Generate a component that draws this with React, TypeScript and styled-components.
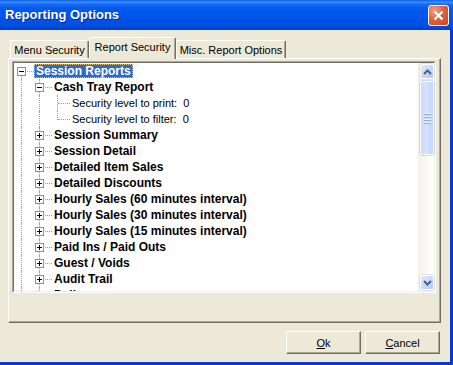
import React from "react";
import styled, { createGlobalStyle, css } from "styled-components";

const GlobalStyle = createGlobalStyle`
  html, body {
    margin: 0;
    padding: 0;
    background: #ece9d8;
    overflow: hidden;
  }
  body {
    font-family: "Liberation Sans", Arial, sans-serif;
    font-size: 11px;
    color: #000;
  }
`;

type Guide = " " | "|" | "T" | "L" | "F";

type TreeRow = {
  guides: Guide[];
  box?: "+" | "-";
  label: string;
  bold?: boolean;
  selected?: boolean;
};

const rows: TreeRow[] = [
  { guides: ["F"], box: "-", label: "Session Reports", bold: true, selected: true },
  { guides: ["|", "T"], box: "-", label: "Cash Tray Report", bold: true },
  { guides: ["|", "|", "T"], label: "Security level to print:  0" },
  { guides: ["|", "|", "L"], label: "Security level to filter:  0" },
  { guides: ["|", "T"], box: "+", label: "Session Summary", bold: true },
  { guides: ["|", "T"], box: "+", label: "Session Detail", bold: true },
  { guides: ["|", "T"], box: "+", label: "Detailed Item Sales", bold: true },
  { guides: ["|", "T"], box: "+", label: "Detailed Discounts", bold: true },
  { guides: ["|", "T"], box: "+", label: "Hourly Sales (60 minutes interval)", bold: true },
  { guides: ["|", "T"], box: "+", label: "Hourly Sales (30 minutes interval)", bold: true },
  { guides: ["|", "T"], box: "+", label: "Hourly Sales (15 minutes interval)", bold: true },
  { guides: ["|", "T"], box: "+", label: "Paid Ins / Paid Outs", bold: true },
  { guides: ["|", "T"], box: "+", label: "Guest / Voids", bold: true },
  { guides: ["|", "T"], box: "+", label: "Audit Trail", bold: true },
  { guides: ["|", "T"], box: "+", label: "Delivery", bold: true },
];

const tabs = [
  { label: "Menu Security", width: 79 },
  { label: "Report Security", width: 87, active: true },
  { label: "Misc. Report Options", width: 110 },
];

const Window = styled.div`
  width: 453px;
  height: 365px;
  display: flex;
  flex-direction: column;
`;

const TitleBar = styled.div`
  flex: none;
  height: 30px;
  box-sizing: border-box;
  display: flex;
  align-items: center;
  justify-content: space-between;
  padding: 0 4px 0 5px;
  background: linear-gradient(
    to bottom,
    #0a5fe6 0%,
    #3a8dff 7%,
    #1a6cf6 14%,
    #0058ee 30%,
    #0054e8 60%,
    #0050e0 85%,
    #003fc8 100%
  );
`;

const Title = styled.span`
  font-family: "Liberation Sans", Arial, sans-serif;
  font-weight: bold;
  font-size: 13px;
  color: #fff;
  text-shadow: 1px 1px #0a2a9a;
  padding-bottom: 1px;
`;

const CloseButton = styled.div`
  width: 21px;
  height: 21px;
  box-sizing: border-box;
  border: 1px solid #fff;
  border-radius: 3px;
  display: flex;
  align-items: center;
  justify-content: center;
  background: radial-gradient(circle at 30% 25%, #f4a184 0%, #e3603c 45%, #cf4520 100%);
  margin-top: 1px;
`;

const Frame = styled.div`
  flex: 1;
  display: flex;
  flex-direction: column;
  background: #ece9d8;
  border-right: 3px solid #0838d2;
  border-bottom: 3px solid #0838d2;
  padding: 7px 9px 0 8px;
`;

const TabStrip = styled.div`
  height: 21px;
  display: flex;
  align-items: flex-end;
  padding-left: 2px;
  position: relative;
  z-index: 1;
`;

const Tab = styled.div<{ $active?: boolean; $w: number }>`
  box-sizing: border-box;
  width: ${(p) => p.$w}px;
  height: 18px;
  display: flex;
  align-items: center;
  justify-content: center;
  border-top: 1px solid #fff;
  border-left: 1px solid #fff;
  border-right: 1px solid #716f64;
  box-shadow: inset -1px 0 #aca899;
  border-radius: 2px 2px 0 0;
  background: #ece9d8;
  font-size: 11px;
  white-space: nowrap;
  ${(p) =>
    p.$active &&
    css`
      height: 22px;
      margin-bottom: -1px;
      padding-bottom: 3px;
    `}
`;

const Panel = styled.div`
  height: 265px;
  box-sizing: border-box;
  border-top: 1px solid #fff;
  border-left: 1px solid #fff;
  border-right: 1px solid #716f64;
  border-bottom: 1px solid #716f64;
  box-shadow: inset -1px -1px #aca899;
  padding: 2px 4px 0 3px;
`;

const Tree = styled.div`
  height: 232px;
  box-sizing: border-box;
  border: 1px solid;
  border-color: #aca899 #fff #fff #aca899;
  display: flex;
`;

const TreeInner = styled.div`
  flex: 1;
  display: flex;
  border: 1px solid;
  border-color: #716f64 #f1efe2 #f1efe2 #716f64;
  background: #fff;
  min-width: 0;
`;

const List = styled.div`
  flex: 1;
  overflow: hidden;
`;

const Row = styled.div`
  height: 16px;
  display: flex;
  align-items: center;
`;

const Cell = styled.span<{ $g: Guide }>`
  position: relative;
  flex: none;
  width: 18px;
  height: 16px;
  &::before {
    content: "";
    position: absolute;
    left: 7px;
    top: ${(p) => (p.$g === "F" ? 8 : 0)}px;
    bottom: ${(p) => (p.$g === "L" ? 7 : 0)}px;
    border-left: 1px dotted #a3a093;
    display: ${(p) => (p.$g === " " ? "none" : "block")};
  }
  &::after {
    content: "";
    position: absolute;
    left: 8px;
    right: -2px;
    top: 8px;
    border-top: 1px dotted #a3a093;
    display: ${(p) => (p.$g === "T" || p.$g === "L" || p.$g === "F" ? "block" : "none")};
  }
`;

const Expander = styled.span<{ $open: boolean }>`
  position: absolute;
  left: 3px;
  top: 4px;
  width: 9px;
  height: 9px;
  box-sizing: border-box;
  border: 1px solid #8f8f8f;
  background: #fff;
  z-index: 1;
  &::before {
    content: "";
    position: absolute;
    left: 1px;
    top: 3px;
    width: 5px;
    height: 1px;
    background: #000;
  }
  &::after {
    content: "";
    position: absolute;
    left: 3px;
    top: 1px;
    width: 1px;
    height: 5px;
    background: #000;
    display: ${(p) => (p.$open ? "none" : "block")};
  }
`;

const Label = styled.span<{ $bold?: boolean; $selected?: boolean }>`
  position: relative;
  z-index: 1;
  margin-left: 2px;
  padding: 0 2px;
  height: 14px;
  line-height: 14px;
  white-space: pre;
  font-size: ${(p) => (p.$bold ? 12 : 11)}px;
  font-weight: ${(p) => (p.$bold ? "bold" : "normal")};
  background: #fff;
  ${(p) =>
    p.$selected &&
    css`
      background: #316ac5;
      color: #fff;
      outline: 1px dotted #e6c46a;
      outline-offset: -1px;
    `}
`;

const Scrollbar = styled.div`
  flex: none;
  width: 16px;
  box-sizing: border-box;
  padding: 1px 0 1px 2px;
  display: flex;
  flex-direction: column;
  background: linear-gradient(to right, #f3f1ec, #fefefb);
`;

const ScrollButton = styled.div`
  height: 15px;
  box-sizing: border-box;
  border: 1px solid #fff;
  border-radius: 2px;
  background: linear-gradient(135deg, #e1eafe 0%, #c5d6fc 60%, #b4c8f6 100%);
  box-shadow: 0 0 0 0.5px #bccdf3;
  display: flex;
  align-items: center;
  justify-content: center;
`;

const Thumb = styled.div`
  margin-top: 2px;
  height: 74px;
  box-sizing: border-box;
  border: 1px solid #fff;
  border-radius: 2px;
  background: linear-gradient(to right, #c9d8fc 0%, #d6e2fd 40%, #c6d6fc 100%);
  box-shadow: 0 0 0 0.5px #9eb7ec;
  display: flex;
  flex-direction: column;
  align-items: center;
  justify-content: center;
  gap: 1px;
`;

const Grip = styled.span`
  width: 7px;
  height: 1px;
  background: #eef3fe;
  box-shadow: 0 1px #8cb0f8;
  margin-bottom: 1px;
`;

const Track = styled.div`
  flex: 1;
`;

const ButtonRow = styled.div`
  margin-top: 8px;
  padding-right: 1px;
  display: flex;
  justify-content: flex-end;
  gap: 4px;
`;

const DialogButton = styled.button`
  width: 75px;
  height: 23px;
  box-sizing: border-box;
  border: 1px solid;
  border-color: #fff #716f64 #716f64 #fff;
  box-shadow: inset -1px -1px #aca899;
  background: #ece9d8;
  font-family: "Liberation Sans", Arial, sans-serif;
  font-size: 11px;
  color: #000;
  padding: 0;
`;

const Arrow = ({ up }: { up: boolean }) => (
  <svg width="9" height="6" viewBox="0 0 9 6">
    <polyline
      points={up ? "1,5 4.5,1.5 8,5" : "1,1 4.5,4.5 8,1"}
      fill="none"
      stroke="#4d6185"
      strokeWidth="2"
    />
  </svg>
);

export default function App() {
  return (
    <>
      <GlobalStyle />
      <Window>
        <TitleBar>
          <Title>Reporting Options</Title>
          <CloseButton>
            <svg width="13" height="13" viewBox="0 0 13 13">
              <path d="M2.5 2.5 L10.5 10.5 M10.5 2.5 L2.5 10.5" stroke="#fff" strokeWidth="2.2" />
            </svg>
          </CloseButton>
        </TitleBar>
        <Frame>
          <TabStrip>
            {tabs.map((t) => (
              <Tab key={t.label} $w={t.width} $active={t.active}>
                {t.label}
              </Tab>
            ))}
          </TabStrip>
          <Panel>
            <Tree>
              <TreeInner>
                <List>
                  {rows.map((r, i) => (
                    <Row key={i}>
                      {r.guides.map((g, j) => (
                        <Cell key={j} $g={g}>
                          {r.box && j === r.guides.length - 1 && <Expander $open={r.box === "-"} />}
                        </Cell>
                      ))}
                      <Label $bold={r.bold} $selected={r.selected}>
                        {r.label}
                      </Label>
                    </Row>
                  ))}
                </List>
                <Scrollbar>
                  <ScrollButton>
                    <Arrow up />
                  </ScrollButton>
                  <Thumb>
                    <Grip />
                    <Grip />
                    <Grip />
                    <Grip />
                  </Thumb>
                  <Track />
                  <ScrollButton>
                    <Arrow up={false} />
                  </ScrollButton>
                </Scrollbar>
              </TreeInner>
            </Tree>
          </Panel>
          <ButtonRow>
            <DialogButton>
              <u>O</u>k
            </DialogButton>
            <DialogButton>
              <u>C</u>ancel
            </DialogButton>
          </ButtonRow>
        </Frame>
      </Window>
    </>
  );
}
